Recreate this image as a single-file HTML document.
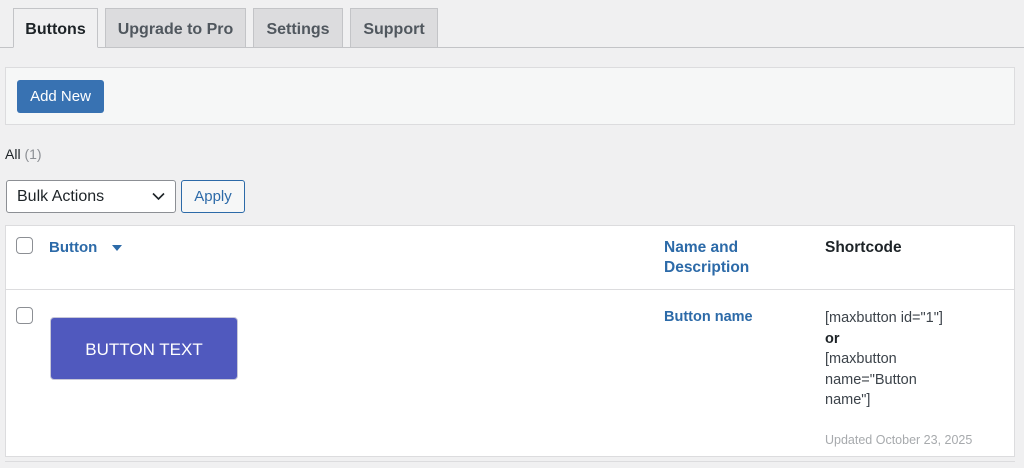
<!DOCTYPE html><html><head><style>
body{margin:0;width:1024px;height:468px;background:#f0f0f1;font-family:"Liberation Sans",sans-serif;position:relative;overflow:hidden;color:#1d2327}
.a{position:absolute;box-sizing:border-box}
.tab{top:8px;height:40px;background:#dcdcde;border:1px solid #c3c4c7;font-weight:bold;font-size:16px;color:#50575e;text-align:center;line-height:41px}
.cb{width:17px;height:17px;border:1px solid #8c8f94;border-radius:4px;background:#fff}
.lnk{color:#2c6aa8;font-weight:bold;font-size:15px}
</style></head><body>
<div class="a" style="left:0;top:47px;width:1024px;height:1px;background:#c3c4c7"></div>
<div class="a tab" style="left:13px;width:85px;background:#f0f0f1;border-bottom:1px solid #f0f0f1;color:#1d2327">Buttons</div>
<div class="a tab" style="left:105px;width:141px">Upgrade to Pro</div>
<div class="a tab" style="left:253px;width:90px">Settings</div>
<div class="a tab" style="left:350px;width:88px">Support</div>
<div class="a" style="left:5px;top:67px;width:1010px;height:58px;background:#f6f7f7;border:1px solid #dcdcde"></div>
<div class="a" style="left:17px;top:80px;width:87px;height:33px;background:#3872b2;border-radius:3px;color:#fff;font-size:15px;text-align:center;line-height:34px">Add New</div>
<div class="a" style="left:5px;top:145px;font-size:14px;line-height:18px">All <span style="color:#8c8f94">(1)</span></div>
<div class="a" style="left:6px;top:180px;width:170px;height:33px;background:#fff;border:1px solid #8c8f94;border-radius:3px;font-size:16px;line-height:31px;padding-left:10px">Bulk Actions
<svg style="position:absolute;right:10px;top:11px" width="13" height="9" viewBox="0 0 13 9"><path d="M1 1.5l5.5 5.5 5.5-5.5" fill="none" stroke="#1d2327" stroke-width="1.6"/></svg></div>
<div class="a" style="left:181px;top:180px;width:64px;height:33px;background:#f6f7f7;border:1px solid #2c6aa8;border-radius:3px;color:#2c6aa8;font-size:15px;text-align:center;line-height:32px">Apply</div>
<div class="a" style="left:5px;top:225px;width:1010px;height:232px;background:#fff;border:1px solid #dcdcde"></div>
<div class="a" style="left:5px;top:289px;width:1010px;height:1px;background:#dcdcde"></div>
<div class="a" style="left:5px;top:461px;width:1010px;height:1px;background:#dcdcde"></div>
<div class="a cb" style="left:16px;top:237px"></div>
<div class="a lnk" style="left:49px;top:239px">Button</div>
<svg class="a" style="left:112px;top:245px" width="10" height="7" viewBox="0 0 10 7"><path d="M0 0h10L5 6z" fill="#2c6aa8"/></svg>
<div class="a lnk" style="left:664px;top:238px;line-height:20px;font-size:15.5px">Name and<br>Description</div>
<div class="a" style="left:825px;top:239px;font-weight:bold;font-size:15.5px">Shortcode</div>
<div class="a cb" style="left:16px;top:307px"></div>
<div class="a" style="left:50px;top:317px;width:188px;height:63px;background:#5059be;border:1px solid #c8c8d8;border-radius:4px;color:#fff;font-size:17px;text-align:center;line-height:63px">BUTTON TEXT</div>
<div class="a lnk" style="left:664px;top:309px;font-size:14.5px">Button name</div>
<div class="a" style="left:825px;top:308px;font-size:14.5px;line-height:20.5px;color:#3c434a">[maxbutton id="1"]<br><b style="color:#1d2327">or</b><br>[maxbutton<br>name="Button<br>name"]</div>
<div class="a" style="left:825px;top:433px;font-size:12.5px;color:#a7aaad">Updated October 23, 2025</div>
</body></html>
